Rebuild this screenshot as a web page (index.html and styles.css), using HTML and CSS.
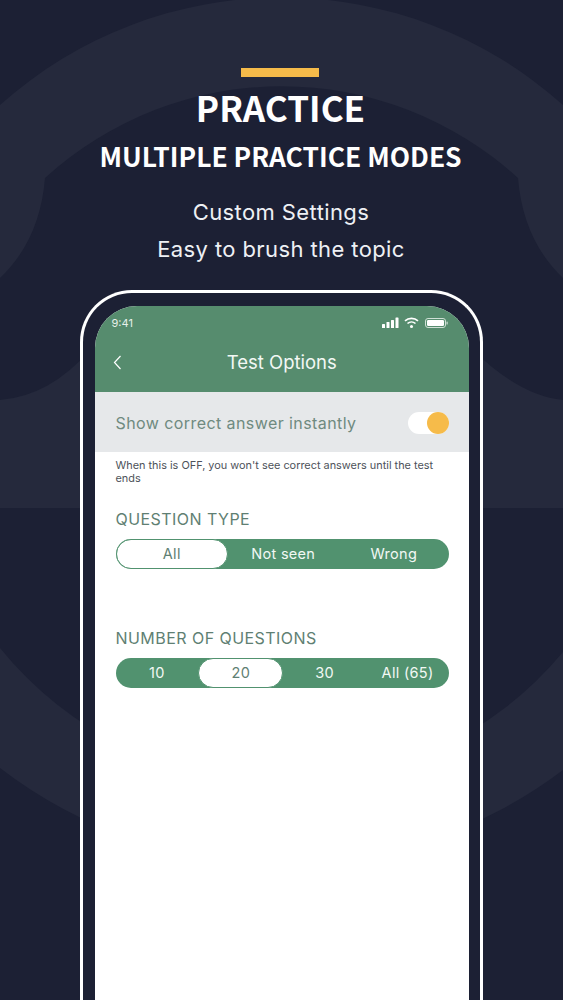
FILE: index.html
```html
<!DOCTYPE html>
<html lang="en">
<head>
<meta charset="utf-8">
<title>Practice</title>
<link rel="stylesheet" href="styles.css">
</head>
<body>
<div class="page">
  <svg class="backdrop" viewBox="0 0 563 1000" aria-hidden="true">
    <path d="M0 105A422 422 0 0 1 563 105V278Q523 240 518 178A351 351 0 0 0 45 178Q40 240 0 278Z"/>
    <path d="M0 400Q50 396 90 350H473Q520 396 563 400V508H0Z"/>
    <path d="M0 648A364 364 0 0 0 563 652V770A464 464 0 0 1 0 768Z"/>
  </svg>
  <header class="hero">
    <div class="bar"></div>
    <h1 class="title">PRACTICE</h1>
    <h2 class="subtitle">MULTIPLE PRACTICE MODES</h2>
    <p class="line line-first">Custom Settings</p>
    <p class="line">Easy to brush the topic</p>
  </header>
  <div class="phone">
    <div class="screen">
      <div class="appbar">
        <div class="status">
          <span class="time">9:41</span>
          <svg class="status-icons" viewBox="0 0 66 12" aria-hidden="true">
            <g fill="#fff">
              <rect x="0" y="7" width="3" height="4" rx=".6"/>
              <rect x="4.5" y="5" width="3" height="6" rx=".6"/>
              <rect x="9" y="3" width="3" height="8" rx=".6"/>
              <rect x="13.5" y="0.5" width="3" height="10.5" rx=".6"/>
              <circle cx="29.5" cy="9.6" r="1.5"/>
            </g>
            <g fill="none" stroke="#fff" stroke-width="1.6">
              <path d="M23 3.9A9.5 9.5 0 0 1 36 3.9"/>
              <path d="M25.5 6.5A6 6 0 0 1 33.5 6.5"/>
            </g>
            <rect x="43.5" y="1.5" width="20" height="9" rx="2.5" fill="none" stroke="#cfe0d6" stroke-width="1"/>
            <rect x="45" y="3" width="17" height="6" rx="1.3" fill="#fff"/>
            <rect x="64.5" y="4.5" width="1.2" height="3" rx=".6" fill="#cfe0d6"/>
          </svg>
        </div>
        <div class="nav">
          <svg class="back" viewBox="0 0 9 15" aria-hidden="true"><path d="M7.5 1L1.5 7.5L7.5 14" fill="none" stroke="#fff" stroke-width="1.2"/></svg>
          <span class="nav-title">Test Options</span>
        </div>
      </div>
      <div class="option">
        <span class="option-label">Show correct answer instantly</span>
        <span class="toggle"><span class="knob"></span></span>
      </div>
      <p class="note">When this is OFF, you won't see correct answers until the test ends</p>
      <section class="group group-type">
        <h3 class="group-title">QUESTION TYPE</h3>
        <div class="segments">
          <span class="segment active">All</span>
          <span class="segment">Not seen</span>
          <span class="segment">Wrong</span>
        </div>
      </section>
      <section class="group group-count">
        <h3 class="group-title">NUMBER OF QUESTIONS</h3>
        <div class="segments">
          <span class="segment">10</span>
          <span class="segment active">20</span>
          <span class="segment">30</span>
          <span class="segment">All (65)</span>
        </div>
      </section>
    </div>
  </div>
</div>
</body>
</html>
```
FILE: styles.css
```css
* { box-sizing: border-box; margin: 0; padding: 0; }
html, body { height: 100%; }
body { background: #1c2034; overflow: hidden; font-family: Inter, "Liberation Sans", sans-serif; }
.page { position: relative; width: 563px; height: 1000px; overflow: hidden; background: #1c2034; }
.backdrop { position: absolute; left: 0; top: 0; width: 563px; height: 1000px; fill: #25293c; }

.hero { position: relative; display: flex; flex-direction: column; align-items: center; padding-top: 68px; color: #fff; height: 290px; }
.bar { width: 78px; height: 9px; margin-right: 3px; background: #f6bb4a; }
.title { font: 700 35px/46px "Noto Sans CJK SC", "Noto Sans", sans-serif; margin-top: 7px; margin-right: 2px; }
.subtitle { font: 700 26.4px/36px "Noto Sans CJK SC", "Noto Sans", sans-serif; margin-top: 8px; margin-right: 2px; }
.line { font: 400 22px/37px Inter, sans-serif; letter-spacing: .4px; color: #eef0f4; margin-right: 1px; }
.line-first { margin-top: 20px; }

.phone { position: relative; width: 403px; height: 760px; margin-left: 80px; padding: 12.5px 11px 0 11.5px; background: #1c2034; border: 3.5px solid #fff; border-bottom: 0; border-radius: 52px 52px 0 0; }
.screen { height: 100%; background: #fff; border-radius: 42px 42px 0 0; overflow: hidden; }

.appbar { height: 86px; background: #568c6e; color: #fff; }
.status { display: flex; justify-content: space-between; align-items: center; height: 34px; padding: 0 21px 0 17px; }
.time { font-size: 11px; color: #e6f0ea; }
.status-icons { width: 66px; height: 12px; }
.nav { position: relative; display: flex; justify-content: center; align-items: center; height: 44px; }
.back { position: absolute; left: 18px; top: 15px; width: 9px; height: 15px; }
.nav-title { font-size: 18.5px; color: #f2f8f4; }

.option { display: flex; justify-content: space-between; align-items: center; height: 60px; padding: 2px 20px 0 21px; background: #e6e8ea; }
.option-label { font-size: 16px; letter-spacing: .42px; color: #6f8a80; }
.toggle { display: flex; justify-content: flex-end; width: 41px; height: 22px; border-radius: 11px; background: #fff; }
.knob { width: 22px; height: 22px; border-radius: 50%; background: #f6bb4a; }

.note { padding: 7px 20px 0 21px; font-size: 10.9px; line-height: 13px; color: #4d525a; }

.group { padding: 0 20px 0 21px; }
.group-type { margin-top: 24px; }
.group-count { margin-top: 59px; }
.group-title { font-size: 16px; font-weight: 400; line-height: 20px; letter-spacing: .45px; color: #5f7f73; margin-bottom: 10px; }
.segments { display: flex; height: 30px; border-radius: 15px; background: #51926f; }
.segment { flex: 1; display: flex; justify-content: center; align-items: center; font-size: 14.5px; letter-spacing: .3px; color: #f2f8f4; border-radius: 15px; }
.segment.active { background: #fff; color: #5f7f73; border: 1px solid #51926f; }
```
